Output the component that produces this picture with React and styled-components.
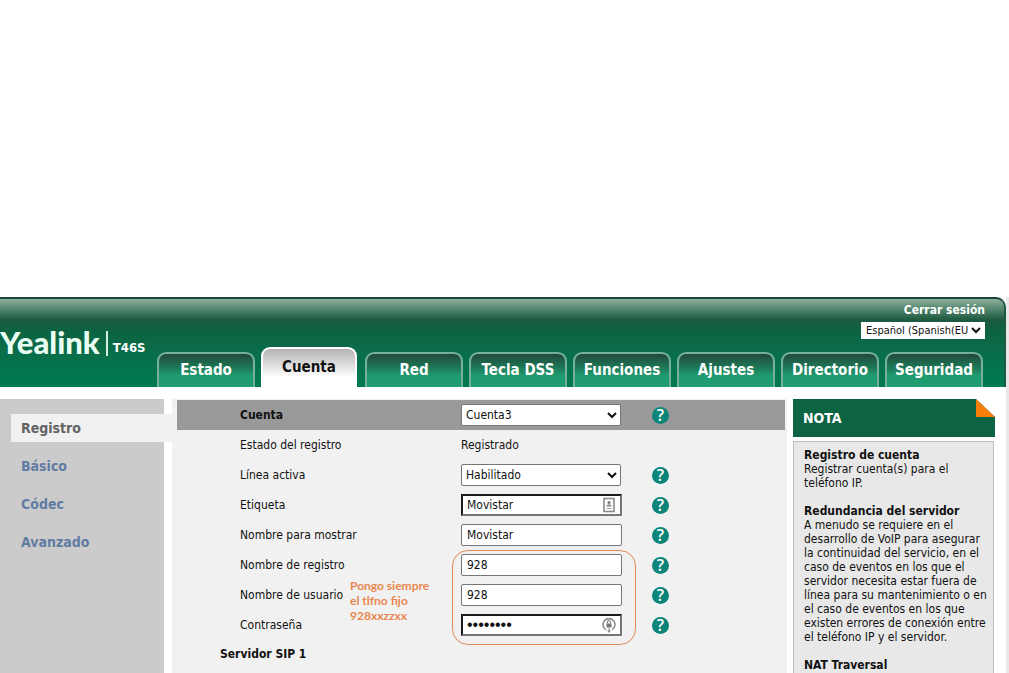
import React from 'react';
import styled, { createGlobalStyle, css } from 'styled-components';

const GlobalStyle = createGlobalStyle`
  * {
    box-sizing: border-box;
  }

  body {
    margin: 0;
    background: #ffffff;
    color: #111111;
    font-family: 'DejaVu Sans Condensed', 'DejaVu Sans', sans-serif;
    font-size: 12px;
    line-height: 14px;
  }

  html, body, #root {
    height: 100%;
  }

  input, select, button {
    font: inherit;
    color: inherit;
  }
`;

const Page = styled.div`
  min-height: 100%;
  padding-top: 297px;
  display: flex;
  flex-direction: column;
`;

const Shell = styled.div`
  flex: 1;
  display: flex;
  flex-direction: column;
  border-right: 3px solid #e8e8e8;
`;

const Header = styled.header`
  height: 90px;
  display: flex;
  justify-content: space-between;
  border-top: 2px solid #1d4438;
  border-right: 2px solid #1d5a42;
  border-top-right-radius: 10px;
  background: linear-gradient(#8fb09f 0, #5e8e77 8px, #1d5a40 21px, #0c6341 32px, #0a6c49 50px, #007b50 88px);
  color: #ffffff;
`;

const Brand = styled.div`
  display: flex;
  align-items: flex-end;
  height: 58px;
`;

const Logo = styled.span`
  font-family: Lato, sans-serif;
  font-size: 31px;
  font-weight: 900;
  line-height: 30px;
  color: #e9fff4;
`;

const Model = styled.span`
  margin: 0 0 1px 6px;
  padding: 9px 0 0 5px;
  border-left: 2px solid #d5eee2;
  font-size: 13px;
  font-weight: bold;
  line-height: 16px;
`;

const HeaderSide = styled.div`
  display: flex;
  flex-direction: column;
  align-items: flex-end;
  justify-content: space-between;
  padding-right: 19px;
`;

const Session = styled.div`
  display: flex;
  flex-direction: column;
  align-items: flex-end;
  gap: 5px;
  padding-top: 4px;
`;

const Logout = styled.a`
  color: #ffffff;
  font-weight: bold;
  text-decoration: none;
`;

const LanguageSelect = styled.select`
  width: 124px;
  height: 17px;
  border: 1px solid #ffffff;
  background: #ffffff;
  color: #111111;
  font-size: 11px;
`;

const Tabs = styled.nav`
  display: flex;
  align-items: flex-end;
  gap: 6px;
  padding-right: 2px;
`;

const Tab = styled.a`
  width: 98px;
  height: 35px;
  display: flex;
  justify-content: center;
  padding-top: 8px;
  border: 2px solid #76b09a;
  border-bottom: 0;
  border-radius: 9px 9px 0 0;
  background: linear-gradient(#23493a, #1c7756 13px, #1f9c70 22px);
  color: #ffffff;
  font-size: 15px;
  font-weight: bold;
  line-height: 16px;
  text-decoration: none;

  ${({ $active }) => $active && css`
    width: 96px;
    height: 40px;
    margin-right: 2px;
    padding-top: 10px;
    border-color: #ffffff;
    background: linear-gradient(#b5b2b4, #ffffff 28px);
    color: #111111;
  `}
`;

const Columns = styled.div`
  flex: 1;
  display: grid;
  grid-template-columns: 164px 1fr 202px;
  padding: 12px 11px 0 0;
`;

const Sidebar = styled.nav`
  display: flex;
  flex-direction: column;
  gap: 10px;
  padding: 15px 0 0 11px;
  background: #cbcbcb;
`;

const SideLink = styled.a`
  height: 28px;
  padding-left: 10px;
  color: #627ba2;
  font-size: 14px;
  font-weight: bold;
  line-height: 28px;
  text-decoration: none;

  ${({ $active }) => $active && css`
    margin-right: -8px;
    background: #f1f1f1;
    color: #636363;
  `}
`;

const Main = styled.main`
  position: relative;
  margin: 0 6px 0 8px;
  padding: 1px 2px 0 5px;
  background: #f1f1f1;
`;

const Row = styled.div`
  display: grid;
  grid-template-columns: 221px 191px 1fr;
  align-items: center;
  height: 30px;
  padding-left: 63px;
  background: ${({ $head }) => ($head ? '#999999' : 'transparent')};

  label {
    font-weight: ${({ $head }) => ($head ? 'bold' : 'normal')};
  }
`;

const SectionTitle = styled.h2`
  margin: 0;
  padding-left: 43px;
  font-size: 12px;
  line-height: 28px;
`;

const Select = styled.select`
  width: 160px;
  height: 22px;
  border: 1px solid #767676;
  border-radius: 2px;
  background: #ffffff;
`;

const Field = styled.div`
  position: relative;
  width: 161px;
`;

const Input = styled.input`
  display: block;
  width: 100%;
  height: 22px;
  padding: 0 5px;
  border: 1px solid #767676;
  border-radius: 2px;
  background: #ffffff;

  ${({ $inset }) => $inset && css`
    padding: 0 4px;
    border-width: 2px;
    border-color: #1b1b1b #767676 #767676 #1b1b1b;
    border-radius: 0;
  `}

  &[type='password'] {
    font-family: 'Liberation Sans', sans-serif;
    font-size: 16px;
  }
`;

const FieldIcon = styled.svg`
  position: absolute;
  top: 3px;
  right: 5px;
  width: 16px;
  height: 16px;
`;

const Help = styled.button`
  width: 17px;
  height: 17px;
  padding: 0;
  border: 0;
  border-radius: 50%;
  background: #0c8479;
  color: #ffffff;
  font-family: 'Open Sans', sans-serif;
  font-size: 16px;
  font-weight: 600;
  line-height: 17px;
`;

const Highlight = styled.div`
  position: absolute;
  top: 151px;
  left: 280px;
  width: 184px;
  height: 95px;
  border: 1px solid #e08a55;
  border-radius: 16px;
  pointer-events: none;
`;

const Remark = styled.p`
  position: absolute;
  top: 179px;
  left: 178px;
  margin: 0;
  color: #e8874f;
  font-family: Lato, sans-serif;
  font-size: 12px;
  font-weight: bold;
  line-height: 15px;
`;

const Notes = styled.aside`
  display: flex;
  flex-direction: column;
  gap: 4px;
`;

const NotesTitle = styled.h2`
  display: flex;
  justify-content: space-between;
  margin: 0;
  height: 38px;
  padding-left: 10px;
  background: #0d6443;
  color: #ffffff;
  font-size: 14px;
  line-height: 38px;
`;

const NotesBody = styled.div`
  flex: 1;
  margin-right: 1px;
  padding: 6px 4px 0 10px;
  border: 1px solid #bdbdbd;
  border-bottom: 0;
  background: #e8e8e8;
`;

const Note = styled.section`
  margin-bottom: 14px;

  h3, p {
    margin: 0;
    font-size: 12px;
    line-height: 14px;
  }
`;

const tabs = ['Estado', 'Cuenta', 'Red', 'Tecla DSS', 'Funciones', 'Ajustes', 'Directorio', 'Seguridad'];

const sections = ['Registro', 'Básico', 'Códec', 'Avanzado'];

const fields = [
  { id: 'etiqueta', label: 'Etiqueta', value: 'Movistar', icon: 'card' },
  { id: 'mostrar', label: 'Nombre para mostrar', value: 'Movistar' },
  { id: 'registro', label: 'Nombre de registro', value: '928' },
  { id: 'usuario', label: 'Nombre de usuario', value: '928' },
  { id: 'clave', label: 'Contraseña', value: '12345678', type: 'password', icon: 'lock' },
];

const CardIcon = () => (
  <FieldIcon viewBox="0 0 16 16" fill="none" aria-hidden="true">
    <rect x="3" y="1.5" width="10" height="13" stroke="#8c8c8c" strokeWidth="1.6" />
    <circle cx="8" cy="5.5" r="1.5" fill="#777777" />
    <path d="M5.5 9.5V8.5Q8 6 10.5 8.5V9.5ZM5.5 11.2H10.5V12H5.5Z" fill="#8c8c8c" />
  </FieldIcon>
);

const LockIcon = () => (
  <FieldIcon viewBox="0 0 16 16" fill="none" aria-hidden="true">
    <path d="M5 12.8A6 6 0 1 1 11 12.8" stroke="#8c8c8c" strokeWidth="1.6" />
    <path d="M6 13.2H10L8 16Z" fill="#8c8c8c" />
    <path d="M8 11V14" stroke="#8c8c8c" />
    <rect x="5.5" y="6.5" width="5" height="4" fill="#777777" />
    <path d="M6.5 6.5V5a1.5 1.5 0 0 1 3 0v1.5" stroke="#777777" />
  </FieldIcon>
);

const HelpButton = ({ topic }) => (
  <Help type="button" aria-label={`Ayuda: ${topic}`}>?</Help>
);

const App = () => {
  return (
    <Page>
      <GlobalStyle />
      <Shell>
        <Header>
          <Brand>
            <Logo>Yealink</Logo>
            <Model>T46S</Model>
          </Brand>
          <HeaderSide>
            <Session>
              <Logout href="#salir">Cerrar sesión</Logout>
              <LanguageSelect aria-label="Idioma">
                <option>Español (Spanish(EU</option>
              </LanguageSelect>
            </Session>
            <Tabs>
              {tabs.map((tab) => (
                <Tab key={tab} href={`#${tab}`} $active={tab === 'Cuenta'}>{tab}</Tab>
              ))}
            </Tabs>
          </HeaderSide>
        </Header>

        <Columns>
          <Sidebar>
            {sections.map((name) => (
              <SideLink key={name} href={`#${name}`} $active={name === 'Registro'}>{name}</SideLink>
            ))}
          </Sidebar>

          <Main>
            <Row $head>
              <label htmlFor="cuenta">Cuenta</label>
              <Select id="cuenta">
                <option>Cuenta3</option>
              </Select>
              <HelpButton topic="Cuenta" />
            </Row>
            <Row>
              <span>Estado del registro</span>
              <span>Registrado</span>
            </Row>
            <Row>
              <label htmlFor="linea">Línea activa</label>
              <Select id="linea">
                <option>Habilitado</option>
              </Select>
              <HelpButton topic="Línea activa" />
            </Row>
            {fields.map(({ id, label, value, type = 'text', icon }) => (
              <Row key={id}>
                <label htmlFor={id}>{label}</label>
                <Field>
                  <Input id={id} type={type} defaultValue={value} $inset={Boolean(icon)} />
                  {icon === 'card' && <CardIcon />}
                  {icon === 'lock' && <LockIcon />}
                </Field>
                <HelpButton topic={label} />
              </Row>
            ))}
            <SectionTitle>Servidor SIP 1</SectionTitle>
            <Highlight />
            <Remark>
              Pongo siempre<br />
              el tlfno fijo<br />
              928xxzzxx
            </Remark>
          </Main>

          <Notes>
            <NotesTitle>
              NOTA
              <svg width="19" height="18" viewBox="0 0 19 18" aria-hidden="true">
                <path d="M0 0H19V18Z" fill="#ffffff" />
                <path d="M0 0L19 18H0Z" fill="#f57f0a" />
              </svg>
            </NotesTitle>
            <NotesBody>
              <Note>
                <h3>Registro de cuenta</h3>
                <p>Registrar cuenta(s) para el teléfono IP.</p>
              </Note>
              <Note>
                <h3>Redundancia del servidor</h3>
                <p>
                  A menudo se requiere en el desarrollo de VoIP para asegurar la continuidad del
                  servicio, en el caso de eventos en los que el servidor necesita estar fuera de
                  línea para su mantenimiento o en el caso de eventos en los que existen errores de
                  conexión entre el teléfono IP y el servidor.
                </p>
              </Note>
              <Note>
                <h3>NAT Traversal</h3>
              </Note>
            </NotesBody>
          </Notes>
        </Columns>
      </Shell>
    </Page>
  );
};

export default App;
